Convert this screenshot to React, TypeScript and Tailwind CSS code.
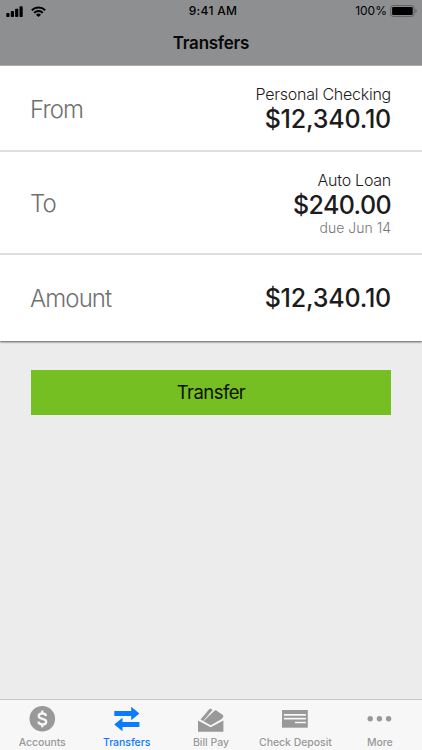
import type { ReactNode } from "react"
import clsx from "clsx"

const tabs: { label: string; icon: ReactNode; active?: boolean; tracking: string }[] = [
    { label: "Accounts", icon: <AccountsIcon />, tracking: "tracking-[-0.1px]" },
    { label: "Transfers", icon: <TransfersIcon />, active: true, tracking: "tracking-[-0.05px]" },
    { label: "Bill Pay", icon: <BillPayIcon />, tracking: "tracking-[0px]" },
    { label: "Check Deposit", icon: <CheckIcon />, tracking: "tracking-[-0.05px]" },
    { label: "More", icon: <MoreIcon />, tracking: "tracking-[-0.1px]" },
]

function AccountsIcon() {
    return (
        <svg width="28" height="28" viewBox="0 0 28 28">
            <circle cx="14.3" cy="13.8" r="12.8" fill="currentColor" />
            <path
                d="M18 10.9c-.3-1.5-1.6-2.4-3.7-2.4-2.2 0-3.6 1-3.6 2.6 0 3.9 7.5 1.7 7.5 5.6 0 1.7-1.5 2.8-3.8 2.8-2.3 0-3.8-1-4-2.8M14.3 5.6v4M14.3 18.3v4"
                fill="none"
                stroke="#f7f7f7"
                strokeWidth="2.3"
            />
        </svg>
    )
}

function TransfersIcon() {
    return (
        <svg width="28" height="28" viewBox="0 0 28 28" fill="currentColor">
            <path d="M1.3 6h16.9V1.7l8.2 6.8-8.2 6.8v-4.3H1.3zM26.4 17H9.5v-4.2l-8.2 6.7 8.2 6.8V22h16.9z" />
        </svg>
    )
}

function BillPayIcon() {
    return (
        <svg width="28" height="28" viewBox="0 0 28 28" fill="currentColor">
            <path d="M1 15.6l12.7 6.6 12.7-6.6v11.1H1z" />
            <path d="M12.2 4.2c.5-.6 1.2-.7 1.9-.3l1.6.9L6.2 15.9l-2.7-1.5z" />
            <path d="M17.4 5.8c.6-.6 1.4-.7 2-.3l6 4.2c1 .8 1.2 1.7.6 2.6l-1.7 2-10.6 6-7.2-4z" />
        </svg>
    )
}

function CheckIcon() {
    return (
        <svg width="28" height="28" viewBox="0 0 28 28">
            <path d="M1 5h25.8v17.7H1z" fill="currentColor" />
            <path d="M2.9 9.8h22M2.9 13.6h22M13.9 17.5h11" stroke="#f7f7f7" strokeWidth="1.7" />
        </svg>
    )
}

function MoreIcon() {
    return (
        <svg width="28" height="28" viewBox="0 0 28 28" fill="currentColor">
            <circle cx="4.2" cy="13.8" r="2.7" />
            <circle cx="13.4" cy="13.8" r="2.7" />
            <circle cx="22.6" cy="13.8" r="2.7" />
        </svg>
    )
}

function StatusBar() {
    return (
        <div className="grid h-[22px] grid-cols-3 items-center pr-1 pl-1.5 text-black">
            <div className="flex items-center gap-2">
                <svg width="17" height="11" viewBox="0 0 17 11">
                    <rect x="0.3" y="7" width="3.2" height="4" rx="0.8" />
                    <rect x="4.8" y="5" width="3.2" height="6" rx="0.8" />
                    <rect x="9.1" y="2.7" width="3.2" height="8.3" rx="0.8" />
                    <rect x="13.5" y="0.3" width="3.2" height="10.7" rx="0.8" />
                </svg>
                <svg width="15" height="11" viewBox="0 0 15 11" fill="none" stroke="black" strokeWidth="2">
                    <path d="M.8 4.2a9.6 9.6 0 0 1 13.4 0M3.2 6.9a6 6 0 0 1 8.6 0" />
                    <path d="M5 8.8a3.6 3.6 0 0 1 5 0L7.5 11z" fill="black" stroke="none" />
                </svg>
            </div>
            <p className="pl-0.5 text-center text-[12px] leading-[22px] font-medium tracking-[0.3px]">9:41 AM</p>
            <div className="flex items-center justify-end gap-[3px]">
                <span className="text-[12px] leading-[22px]">100%</span>
                <svg width="28" height="12" viewBox="0 0 28 12">
                    <rect x="0.7" y="0.6" width="23.4" height="10.8" rx="2.4" fill="none" stroke="#606163" />
                    <rect x="2.1" y="2" width="20.6" height="8" rx="1" />
                    <path d="M25.4 4c1.8.6 1.8 3.4 0 4z" fill="#606163" />
                </svg>
            </div>
        </div>
    )
}

export default function App() {
    return (
        <div className="flex h-[750px] w-[422px] flex-col bg-[#ececec] font-['Inter',sans-serif] text-[#1c1c1c]">
            <header className="h-[66px] border-b border-[#b1b1b2] bg-[#8e8f91]">
                <StatusBar />
                <h1 className="text-center text-[17px] leading-[43px] font-semibold tracking-[-0.25px] text-[#080808]">
                    Transfers
                </h1>
            </header>

            <main className="grow">
                <section className="bg-white shadow-[0_1px_2px_#555]">
                    <div className="flex h-[86px] items-center justify-between border-b-2 border-[#dfdfdf] pr-[31px] pl-[30px]">
                        <span className="pt-1 text-[24px] font-light tracking-[-0.9px] text-[#707070]">From</span>
                        <div className="pt-0.5 text-right">
                            <p className="text-[16px] leading-5 font-light tracking-[-0.25px]">Personal Checking</p>
                            <p className="text-[25px] leading-[30px] font-[450] tracking-[-0.2px]">$12,340.10</p>
                        </div>
                    </div>
                    <div className="flex h-[103px] items-center justify-between border-b-2 border-[#dfdfdf] pr-[31px] pl-[30px]">
                        <span className="pt-0.5 text-[24px] font-light tracking-[-0.9px] text-[#707070]">To</span>
                        <div className="text-right">
                            <p className="text-[16px] leading-5 font-light tracking-[-0.25px]">Auto Loan</p>
                            <p className="text-[25px] leading-[30px] font-[450] tracking-[-0.6px]">$240.00</p>
                            <p className="text-[14px] leading-[15px] font-light text-[#777]">due Jun 14</p>
                        </div>
                    </div>
                    <div className="flex h-[86px] items-center justify-between pt-0.5 pr-[31px] pl-[30px]">
                        <span className="text-[24px] font-light tracking-[-0.9px] text-[#707070]">Amount</span>
                        <p className="text-[25px] font-[450] tracking-[-0.2px]">$12,340.10</p>
                    </div>
                </section>

                <div className="px-[31px] pt-[29px]">
                    <button className="h-[45px] w-full bg-[#76bf22] text-[18.5px] tracking-[-0.55px] text-[#0b1004]">
                        Transfer
                    </button>
                </div>
            </main>

            <nav className="grid h-[51px] grid-cols-5 border-t border-[#c8c8c8] bg-[#f7f7f7]">
                {tabs.map((tab) => (
                    <button
                        key={tab.label}
                        className={clsx(
                            "flex flex-col items-center pt-[5px] whitespace-nowrap",
                            tab.active ? "text-[#0a7aff]" : "text-[#999]"
                        )}
                    >
                        {tab.icon}
                        <span className={clsx("mt-[3px] text-[10.5px] leading-[14px] font-medium", tab.tracking)}>
                            {tab.label}
                        </span>
                    </button>
                ))}
            </nav>
        </div>
    )
}
